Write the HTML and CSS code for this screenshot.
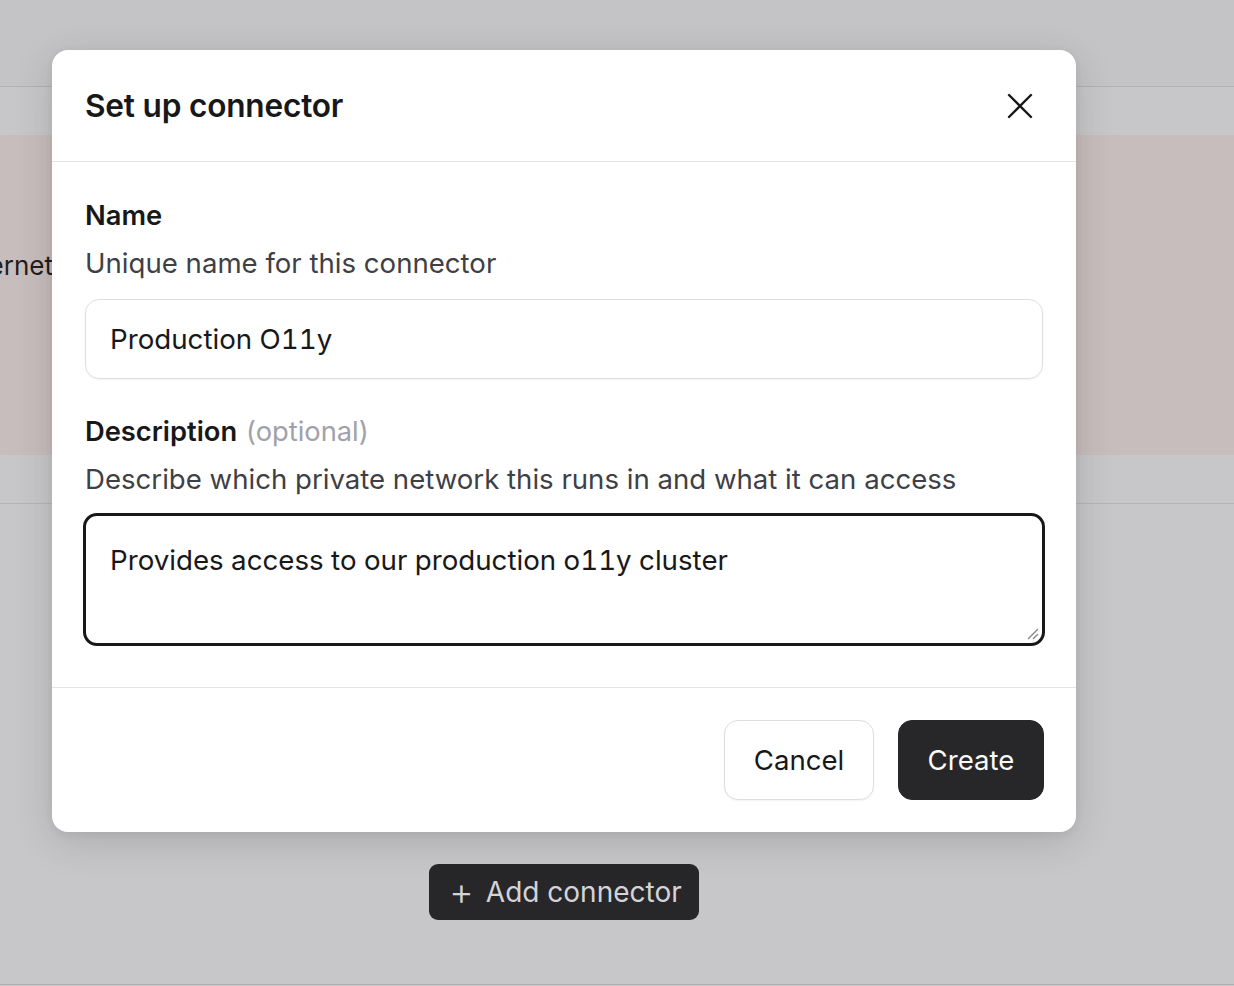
FILE: index.html
```html
<!DOCTYPE html>
<html>
<head>
<meta charset="utf-8">
<link rel="stylesheet" href="styles.css">
</head>
<body>
<div class="page">
  <div class="topbar"></div>
  <div class="gap1"></div>
  <div class="banner"><span class="banner-text">Internet</span></div>
  <div class="gap2"></div>
  <div class="section">
    <button class="add-btn"><span class="plus">+</span>Add connector</button>
  </div>
</div>

<div class="modal">
  <div class="modal-header">
    <h2 class="modal-title">Set up connector</h2>
    <button class="close-btn" aria-label="Close">
      <svg width="28" height="28" viewBox="0 0 28 28"><path d="M3 3L25 25M25 3L3 25" stroke="#18181b" stroke-width="2.4" stroke-linecap="round" fill="none"/></svg>
    </button>
  </div>
  <div class="modal-body">
    <div class="field">
      <div class="label">Name</div>
      <div class="help">Unique name for this connector</div>
      <div class="input">Production O11y</div>
    </div>
    <div class="field">
      <div class="label">Description <span class="optional">(optional)</span></div>
      <div class="help">Describe which private network this runs in and what it can access</div>
      <div class="textarea">Provides access to our production o11y cluster
        <svg class="grip" width="16" height="16" viewBox="0 0 16 16"><path d="M14 4L4 14M14 9L9 14" stroke="#888" stroke-width="1.4" fill="none"/></svg>
      </div>
    </div>
  </div>
  <div class="modal-footer">
    <button class="btn btn-cancel">Cancel</button>
    <button class="btn btn-create">Create</button>
  </div>
</div>
</body>
</html>
```
FILE: styles.css
```css
html, body {
  margin: 0;
  padding: 0;
}
body {
  width: 1234px;
  height: 986px;
  overflow: hidden;
  background: #c7c7c9;
  font-family: Inter, "Noto Sans", sans-serif;
  position: relative;
}
.page {
  display: flex;
  flex-direction: column;
  height: 986px;
}
.topbar {
  height: 86px;
  background: #c4c4c6;
  border-bottom: 1px solid #b2b2b4;
  flex: none;
}
.gap1 {
  height: 48px;
  flex: none;
}
.banner {
  height: 320px;
  background: #c8bdbd;
  flex: none;
  display: flex;
  align-items: center;
  overflow: hidden;
}
.banner-text {
  font-size: 26px;
  color: #1e1e20;
  margin-left: -42px;
  margin-top: -60px;
}
.gap2 {
  height: 48px;
  border-bottom: 1px solid #b5b5b7;
  flex: none;
}
.section {
  flex: 1;
  border-bottom: 1px solid #aeaeb0;
  margin-bottom: 1px;
  position: relative;
}
.add-btn {
  position: absolute;
  left: 429px;
  top: 360px;
  width: 270px;
  height: 56px;
  background: #27272a;
  color: #d4d4d8;
  border: none;
  border-radius: 9px;
  font-family: Inter, sans-serif;
  font-size: 28px;
  display: flex;
  align-items: center;
  padding: 0 0 0 20px;
  gap: 12px;
}
.plus {
  font-size: 38px;
  font-weight: 300;
  line-height: 1;
  margin-top: -3px;
}

.modal {
  position: absolute;
  left: 52px;
  top: 50px;
  width: 1024px;
  height: 782px;
  background: #fff;
  border-radius: 16px;
  box-shadow: 0 10px 40px rgba(0,0,0,0.14), 0 2px 8px rgba(0,0,0,0.06);
  display: flex;
  flex-direction: column;
}
.modal-header {
  height: 112px;
  border-bottom: 1px solid #e4e4e7;
  display: flex;
  align-items: center;
  justify-content: space-between;
  padding: 0 42px 0 33px;
  box-sizing: border-box;
  flex: none;
}
.modal-title {
  margin: 0;
  font-size: 31.6px;
  font-weight: 600;
  color: #18181b;
  letter-spacing: -0.2px;
}
.close-btn {
  background: none;
  border: none;
  padding: 0;
  width: 28px;
  height: 28px;
  display: flex;
}
.modal-body {
  padding: 36px 32px 0 33px;
  display: flex;
  flex-direction: column;
  gap: 35px;
  height: 526px;
  box-sizing: border-box;
  border-bottom: 1px solid #e4e4e7;
  flex: none;
}
.field {
  display: flex;
  flex-direction: column;
  flex: none;
}
.label {
  font-size: 27.3px;
  font-weight: 600;
  color: #18181b;
  line-height: 36px;
}
.optional {
  font-weight: 400;
  color: #a1a1aa;
  margin-left: 2px;
}
.help {
  font-size: 27.6px;
  color: #3f3f46;
  line-height: 36px;
  margin-top: 11px;
}
.input {
  margin-top: 18px;
  height: 80px;
  width: 958px;
  box-sizing: border-box;
  border: 1px solid #dedee2;
  border-radius: 14px;
  box-shadow: 0 1px 2px rgba(0,0,0,0.05);
  font-size: 27.7px;
  font-variant-numeric: tabular-nums;
  color: #18181b;
  padding: 0 24px;
  display: flex;
  align-items: center;
  flex: none;
}
.textarea {
  margin-top: 16px;
  margin-left: -2px;
  height: 133px;
  width: 962px;
  box-sizing: border-box;
  border: 3px solid #18181b;
  border-radius: 14px;
  font-size: 27.7px;
  font-variant-numeric: tabular-nums;
  color: #18181b;
  padding: 26px 24px;
  line-height: 36px;
  position: relative;
  flex: none;
}
.grip {
  position: absolute;
  right: 2px;
  bottom: 2px;
}
.modal-footer {
  flex: 1;
  display: flex;
  justify-content: flex-end;
  align-items: center;
  gap: 24px;
  padding: 0 32px 0 0;
}
.btn {
  height: 80px;
  border-radius: 14px;
  font-family: Inter, sans-serif;
  font-size: 27.6px;
  padding: 0;
}
.btn-cancel {
  width: 150px;
  background: #fff;
  border: 1px solid #dedee2;
  color: #18181b;
  box-shadow: 0 1px 2px rgba(0,0,0,0.05);
}
.btn-create {
  width: 146px;
  background: #27272a;
  border: 1px solid #27272a;
  color: #fafafa;
}
```
